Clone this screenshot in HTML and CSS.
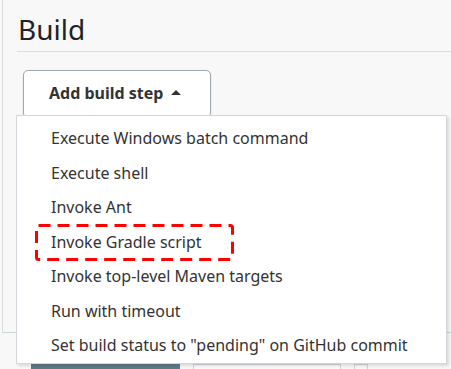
FILE: index.html
```html
<!DOCTYPE html>
<html lang="en">
<head>
    <meta charset="UTF-8">
    <title>Build</title>
    <link rel="stylesheet" href="styles.css">
</head>
<body>
    <div class="section">
        <h2 class="section-title">Build</h2>
        <div class="rule"></div>

        <div class="step-menu">
            <button class="add-step">Add build step <span class="caret"></span></button>

            <ul class="dropdown">
                <li>Execute Windows batch command</li>
                <li>Execute shell</li>
                <li>Invoke Ant</li>
                <li>Invoke Gradle script</li>
                <li>Invoke top-level Maven targets</li>
                <li>Run with timeout</li>
                <li>Set build status to "pending" on GitHub commit</li>
            </ul>
        </div>
    </div>

    <div class="actions">
        <span class="btn-save"></span>
        <span class="btn-apply"></span>
        <span class="btn-small"></span>
    </div>

    <!-- annotation over the menu -->
    <svg class="mark" width="202" height="41" viewBox="0 0 202 41">
        <rect x="1.5" y="1.5" width="196" height="34" rx="2" fill="none" stroke="#ff0000" stroke-width="3" stroke-dasharray="12 7"/>
    </svg>
</body>
</html>
```

FILE: styles.css
```css
* {
    margin: 0;
    padding: 0;
    box-sizing: border-box;
}

body {
    font-family: 'Noto Sans', 'Open Sans', sans-serif;
    background: #f8f8f8;
    color: #333;
    width: 451px;
    height: 369px;
    overflow: hidden;
    position: relative;
}

.section {
    margin-left: 2px;
    border-left: 1px solid #d9dde2;
    border-bottom: 1px solid #cbd8d0;
    height: 333px;
    padding-left: 14px;
    padding-top: 15px;
}

.section-title {
    font-size: 28px;
    font-weight: 400;
    line-height: 28px;
    color: #1f2328;
    padding-left: 1px;
}

.rule {
    height: 1px;
    background: #dcdcdc;
    margin-top: 8px;
}

.step-menu {
    position: relative;
    margin: 18px 0 0 6px;
    width: 188px;
}

.add-step {
    display: flex;
    align-items: center;
    width: 188px;
    height: 48px;
    padding: 0 0 3px 25px;
    background: #fff;
    border: 1px solid #9ea8b0;
    border-radius: 5px;
    box-shadow: 0 1px 2px rgba(0,0,0,0.15);
    font-family: inherit;
    font-size: 16px;
    font-weight: 700;
    color: #333;
}

.caret {
    width: 0;
    height: 0;
    margin-left: 8px;
    border-left: 5px solid transparent;
    border-right: 5px solid transparent;
    border-bottom: 5px solid #333;
}

.dropdown {
    position: absolute;
    left: -7px;
    top: 45px;
    width: 431px;
    height: 249px;
    list-style: none;
    background: #fff;
    border: 1px solid #d3d7db;
    box-shadow: 2px 2px 3px rgba(0,0,0,0.12);
    padding-top: 5px;
    z-index: 2;
}

.dropdown li {
    height: 34.5px;
    line-height: 34.5px;
    padding-left: 34px;
    font-size: 16px;
    color: #333;
    white-space: nowrap;
}

.actions {
    display: flex;
    gap: 13px;
    padding: 31px 0 0 31px;
}

.btn-save {
    width: 149px;
    height: 10px;
    background: #5f7987;
}

.btn-apply {
    width: 148px;
    height: 10px;
    border: 1px solid #cfd3d7;
    background: #fafafa;
}

.btn-small {
    width: 14px;
    height: 10px;
    border: 1px solid #cfd3d7;
}

.mark {
    position: absolute;
    left: 35px;
    top: 224px;
    z-index: 3;
}
```
